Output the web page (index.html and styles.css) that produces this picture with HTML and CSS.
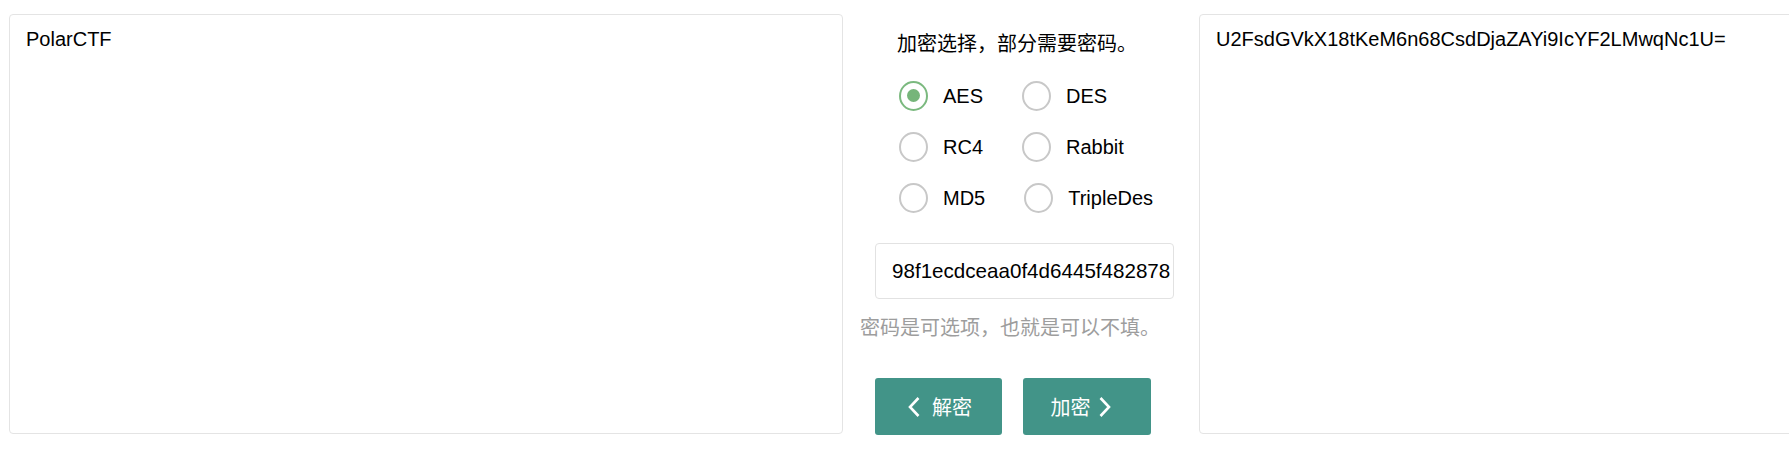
FILE: index.html
```html
<!DOCTYPE html>
<html lang="zh-CN">
<head>
<meta charset="utf-8">
<title>加密解密</title>
<link rel="stylesheet" href="styles.css">
</head>
<body>
<div class="page">
  <textarea class="box" readonly>PolarCTF</textarea>
  <div class="mid">
    <div class="title">加密选择，部分需要密码。</div>
    <div class="radios">
      <div class="row">
        <label class="opt"><span class="dot checked"></span><span class="lbl">AES</span></label>
        <label class="opt"><span class="dot"></span><span class="lbl">DES</span></label>
      </div>
      <div class="row">
        <label class="opt"><span class="dot"></span><span class="lbl">RC4</span></label>
        <label class="opt"><span class="dot"></span><span class="lbl">Rabbit</span></label>
      </div>
      <div class="row">
        <label class="opt"><span class="dot"></span><span class="lbl">MD5</span></label>
        <label class="opt"><span class="dot"></span><span class="lbl">TripleDes</span></label>
      </div>
    </div>
    <input class="pwd" type="text" value="98f1ecdceaa0f4d6445f482878" readonly>
    <div class="hint">密码是可选项，也就是可以不填。</div>
    <div class="btns">
      <button class="btn btn-left"><svg class="chev" width="14" height="22" viewBox="0 0 14 22"><polyline points="11.5,2 3,11 11.5,20" fill="none" stroke="#fff" stroke-width="2.6"/></svg><span>解密</span></button>
      <button class="btn btn-right"><span>加密</span><svg class="chev" width="14" height="22" viewBox="0 0 14 22"><polyline points="2.5,2 11,11 2.5,20" fill="none" stroke="#fff" stroke-width="2.6"/></svg></button>
    </div>
  </div>
  <textarea class="box" readonly>U2FsdGVkX18tKeM6n68CsdDjaZAYi9IcYF2LMwqNc1U=</textarea>
</div>
</body>
</html>
```
FILE: styles.css
```css
html, body {
  margin: 0;
  padding: 0;
  background: #fff;
  overflow: hidden;
}

.page {
  display: flex;
  align-items: flex-start;
  width: 1789px;
  height: 453px;
  padding: 14px 0 0 9px;
  box-sizing: border-box;
  overflow: hidden;
}

.box {
  flex: 0 0 834px;
  width: 834px;
  height: 420px;
  margin: 0;
  border: 1px solid #e4e4e4;
  border-radius: 4px;
  padding: 10px 16px;
  box-sizing: border-box;
  font-family: "Liberation Sans", Arial, "Noto Sans CJK SC", sans-serif;
  font-size: 20px;
  line-height: 28px;
  color: #000;
  background: #fff;
  resize: none;
  outline: none;
  overflow: hidden;
}

.mid {
  flex: 0 0 356px;
  width: 356px;
  padding: 15px 0 0 17px;
  box-sizing: border-box;
  font-family: "Liberation Sans", Arial, "Noto Sans CJK SC", sans-serif;
  font-size: 20px;
  line-height: 28px;
  color: #000;
}

.title {
  margin-left: 37px;
  font-family: "Noto Sans CJK SC", sans-serif;
  height: 28px;
  white-space: nowrap;
}

.radios {
  margin-top: 13px;
  margin-left: 39px;
}

.row {
  display: flex;
  align-items: center;
  gap: 39px;
  height: 51px;
}

.opt {
  display: flex;
  align-items: center;
  gap: 15px;
}

.dot {
  width: 29px;
  height: 30px;
  border: 2px solid #c8c8c8;
  border-radius: 50%;
  box-sizing: border-box;
  display: flex;
  align-items: center;
  justify-content: center;
}

.dot.checked {
  border-color: #7bb97f;
}

.dot.checked::after {
  content: "";
  width: 13px;
  height: 13px;
  border-radius: 50%;
  background: #76b57a;
}

.lbl {
  font-family: "Liberation Sans", Arial, sans-serif;
  color: #000;
}

.pwd {
  display: block;
  margin: 20px 0 0 15px;
  width: 299px;
  height: 56px;
  border: 1px solid #e2e2e2;
  border-radius: 4px;
  padding: 0 0 0 16px;
  box-sizing: border-box;
  font-family: "Liberation Sans", Arial, sans-serif;
  font-size: 20.6px;
  color: #000;
  background: #fff;
  outline: none;
}

.hint {
  margin-top: 14px;
  font-family: "Noto Sans CJK SC", sans-serif;
  color: #9d9d9d;
  white-space: nowrap;
  height: 28px;
}

.btns {
  display: flex;
  gap: 21px;
  margin: 37px 0 0 15px;
}

.btn {
  display: flex;
  align-items: center;
  justify-content: center;
  gap: 11px;
  height: 57px;
  border: none;
  border-radius: 3px;
  background: #429488;
  color: #fff;
  font-family: "Noto Sans CJK SC", sans-serif;
  font-size: 20px;
  line-height: 28px;
  padding: 0;
  cursor: pointer;
}

.btn-left {
  width: 127px;
  padding-left: 2px;
}

.btn-right {
  width: 128px;
  gap: 7px;
  padding-right: 12px;
}

.chev {
  display: block;
}
```
